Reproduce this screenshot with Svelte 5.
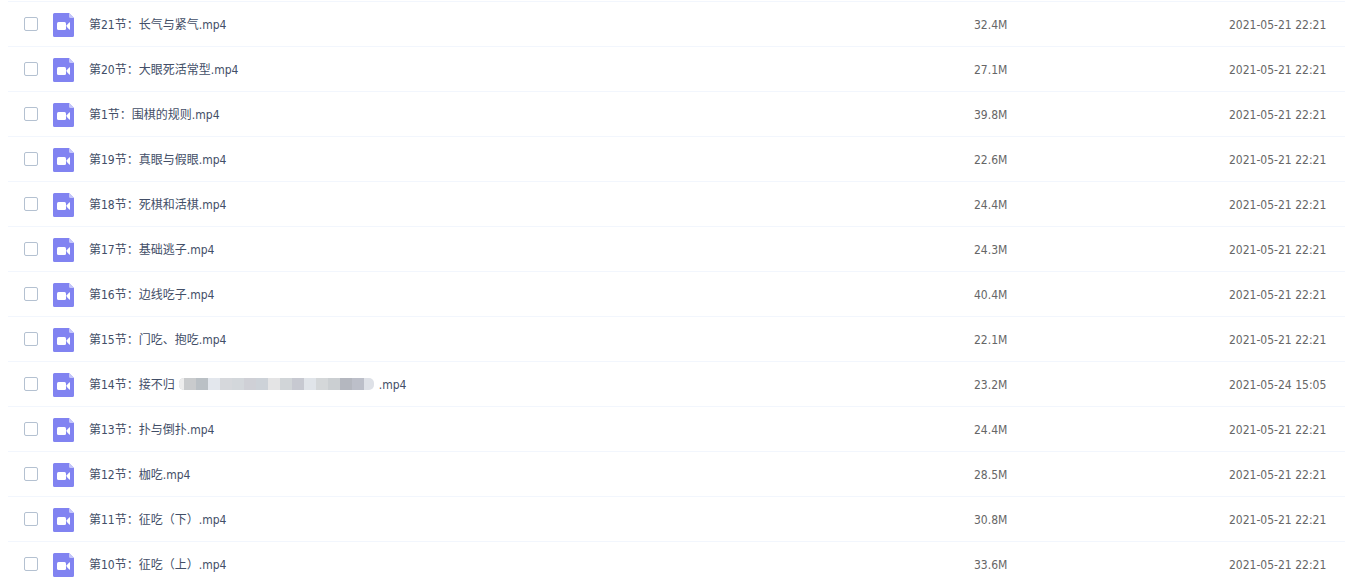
<script>
  const usual = '2021-05-21 22:21';
  const files = [
    { name: '第21节：长气与紧气.mp4', size: '32.4M', date: usual },
    { name: '第20节：大眼死活常型.mp4', size: '27.1M', date: usual },
    { name: '第1节：围棋的规则.mp4', size: '39.8M', date: usual },
    { name: '第19节：真眼与假眼.mp4', size: '22.6M', date: usual },
    { name: '第18节：死棋和活棋.mp4', size: '24.4M', date: usual },
    { name: '第17节：基础逃子.mp4', size: '24.3M', date: usual },
    { name: '第16节：边线吃子.mp4', size: '40.4M', date: usual },
    { name: '第15节：门吃、抱吃.mp4', size: '22.1M', date: usual },
    { name: '第14节：接不归', masked: true, ext: '.mp4', size: '23.2M', date: '2021-05-24 15:05' },
    { name: '第13节：扑与倒扑.mp4', size: '24.4M', date: usual },
    { name: '第12节：枷吃.mp4', size: '28.5M', date: usual },
    { name: '第11节：征吃（下）.mp4', size: '30.8M', date: usual },
    { name: '第10节：征吃（上）.mp4', size: '33.6M', date: usual }
  ];
  const mosaic = [
    '#c9cbcd', '#bac0c5', '#e3e7ed', '#d6d8dc', '#d3d7db', '#cfd0d6', '#cdd2d8', '#e4e4e5',
    '#d1d5d8', '#c7c9d1', '#e0e4e9', '#d4d7d9', '#cbcfd2', '#b4b7bf', '#bcbfc9'
  ];
</script>

<table>
  <colgroup>
    <col />
    <col class="size-col" />
    <col class="date-col" />
  </colgroup>
  <tbody>
    {#each files as file, i}
      <tr>
        <td>
          <div class="file">
            <input type="checkbox" id="file-{i}" />
            <svg class="icon" width="21" height="24" viewBox="0 0 21 24" aria-hidden="true">
              <path d="M1.5 0H16L21 5V22.5a1.5 1.5 0 0 1-1.5 1.5H1.5a1.5 1.5 0 0 1-1.5-1.5V1.5a1.5 1.5 0 0 1 1.5-1.5Z" fill="#8183f1" />
              <path d="M16 0L21 5H17.5A1.5 1.5 0 0 1 16 3.5Z" fill="#c6c7fa" />
              <rect x="4" y="9" width="9" height="8" rx="1.5" fill="#fff" />
              <path d="M13.7 12.2L16.2 9.5Q17 9 17 10V16Q17 17 16.2 16.5L13.7 13.8Z" fill="#fff" />
            </svg>
            <label for="file-{i}">
              {file.name}{#if file.masked}<span class="mosaic">
                  {#each mosaic as color}<i style="background:{color}"></i>{/each}
                  <i class="end"></i>
                </span>{file.ext}{/if}
            </label>
          </div>
        </td>
        <td class="meta">{file.size}</td>
        <td class="meta">{file.date}</td>
      </tr>
    {/each}
  </tbody>
</table>

<style>
  :global(body) {
    background: #fff;
    overflow: hidden;
  }
  table {
    width: calc(100% - 9px);
    margin: 1px 1px 0 8px;
    border-collapse: separate;
    border-spacing: 0;
    table-layout: fixed;
    font: 12px/18px "DejaVu Sans Condensed", "Noto Sans CJK SC", sans-serif;
    color: #424e67;
  }
  .size-col {
    width: 255px;
  }
  .date-col {
    width: 116px;
  }
  td {
    height: 44px;
    padding: 0;
    border-top: 1px solid #f2f6fd;
    vertical-align: middle;
    white-space: nowrap;
  }
  .file {
    display: flex;
    align-items: center;
    padding-left: 16px;
  }
  input {
    appearance: none;
    box-sizing: border-box;
    width: 14px;
    height: 14px;
    margin: 0 15px 0 0;
    border: 1px solid #b4c1d1;
    border-radius: 2px;
    background: #fff;
  }
  input:checked {
    background: #8183f1;
  }
  .icon {
    flex: none;
    margin: 2px 15px 0 0;
  }
  label {
    display: flex;
    align-items: center;
    padding-top: 2px;
  }
  .mosaic {
    display: flex;
    height: 12px;
    margin: 0 5px 2px 4px;
    border-radius: 5px;
    overflow: hidden;
  }
  i {
    width: 12px;
  }
  i:first-child {
    width: 17px;
    border-left: 5px solid #ededed;
    box-sizing: border-box;
  }
  .end {
    width: 10px;
    background: #dee1e7;
  }
  td.meta {
    height: 42px;
    padding-top: 2px;
    color: #666;
  }
</style>
